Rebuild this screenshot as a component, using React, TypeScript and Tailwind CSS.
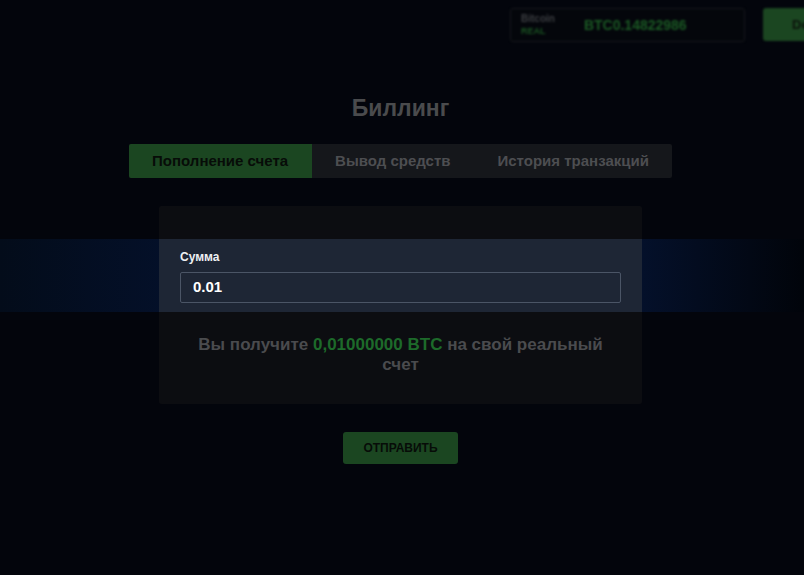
import React from 'react';

const tabs = ['Пополнение счета', 'Вывод средств', 'История транзакций'];

export default function App() {
  return (
    <div className="relative min-h-[575px] w-full overflow-hidden bg-[#03050c] font-['Liberation_Sans',Arial,sans-serif]">
      {/* Spotlight band (tour overlay) */}
      <div className="pointer-events-none absolute inset-x-0 top-[239px] h-[73px] bg-[linear-gradient(to_right,#030c1a_0%,#04102a_22%,#04102a_80%,#01040a_100%)]" />

      {/* Header */}
      <div className="relative mr-[-41px] flex justify-end gap-[18px] pt-2 blur-[1.2px]">
        <div className="flex h-[34px] w-[235px] items-center gap-[29px] rounded-[3px] border border-[#16191d] bg-[#04060b] px-[10px]">
          <div className="flex flex-col leading-none">
            <span className="text-[10px] font-bold text-[#3c3e42]">Bitcoin</span>
            <span className="mt-[3px] text-[9px] font-bold text-[#1a5422]">REAL</span>
          </div>
          <span className="text-[14px] font-bold text-[#1b5a24]">BTC0.14822986</span>
        </div>
        <div className="flex h-[33px] w-[82px] items-center rounded-[3px] bg-[#1b4621] pl-[29px] text-[13px] font-bold text-[#0b120b]">
          Deposit
        </div>
      </div>

      {/* Main */}
      <div className="relative flex flex-col items-center pr-[3px]">
        <h1 className="mt-[52px] text-[23px] font-bold leading-[28px] text-[#4a4b4d]">Биллинг</h1>

        <div className="mt-[22px] flex h-[34px] overflow-hidden rounded-[2px] bg-[#15171b]">
          {tabs.map((t, i) => (
            <div
              key={t}
              className={
                i === 0
                  ? 'flex items-center bg-[#1b4621] px-[23.5px] text-[15px] font-bold text-[#070c08]'
                  : 'flex items-center px-[23.5px] text-[15px] font-bold text-[#4d4e51]'
              }
            >
              {t}
            </div>
          ))}
        </div>

        <div className="mt-[28px] w-[483px] rounded-[3px] bg-[linear-gradient(to_bottom,#0c0d11_33px,#1e2635_33px,#1e2635_106px,#0c0d11_106px)] px-[21px] pb-[29px] pt-[44px]">
          <label className="block text-[12px] font-bold leading-[14px] text-[#eef0f3]">Сумма</label>
          <div className="mt-[8px] flex h-[31px] items-center rounded-[2px] border border-[#4b5566] px-[12px] text-[15px] font-bold text-white">
            0.01
          </div>
          <p className="mt-[32px] px-[12px] text-center text-[17px] font-bold leading-[20px] text-[#4a4b4e]">
            Вы получите <span className="text-[#1d6a2a]">0,01000000 BTC</span> на свой реальный счет
          </p>
        </div>

        <button className="mt-[28px] flex h-[32px] w-[115px] items-center justify-center rounded-[3px] bg-[#1b4621] text-[12px] font-bold text-[#070c08]">
          ОТПРАВИТЬ
        </button>
      </div>
    </div>
  );
}
